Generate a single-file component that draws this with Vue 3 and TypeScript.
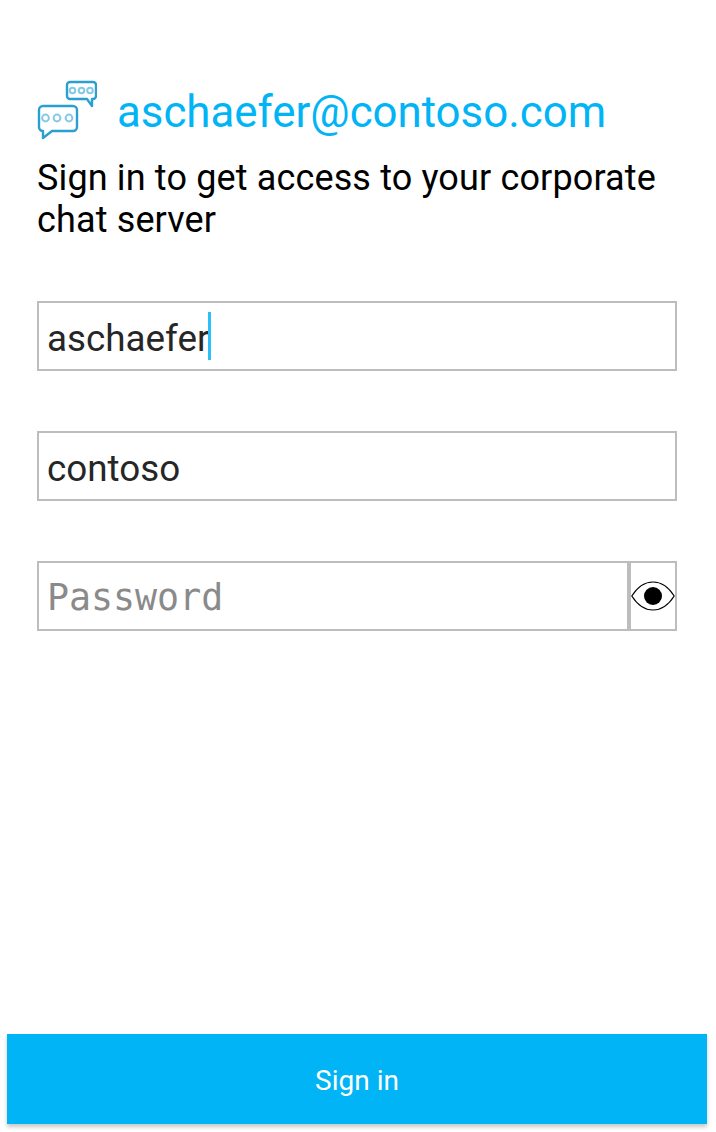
<template>
  <div class="page">
    <div class="head">
      <svg class="logo" width="60" height="60" viewBox="0 0 60 60" fill="none">
        <g stroke="#2a9fd0" stroke-width="2.400" stroke-linejoin="round">
          <path d="M33 2h23a3 3 0 0 1 3 3v11a3 3 0 0 1-3 3h-1v7l-5-7H33a3 3 0 0 1-3-3V5a3 3 0 0 1 3-3z" />
          <path d="M6 26h30a4 4 0 0 1 4 4v17a4 4 0 0 1-4 4H15l-9 7v-7a4 4 0 0 1-4-4V30a4 4 0 0 1 4-4z" />
        </g>
        <g stroke="#86c9e6" stroke-width="2">
          <circle cx="35.500" cy="10.500" r="2.800" />
          <circle cx="44.500" cy="10.500" r="2.800" />
          <circle cx="53" cy="10.500" r="2.800" />
          <circle cx="8.500" cy="38" r="3.400" />
          <circle cx="20" cy="38" r="3.400" />
          <circle cx="32" cy="38" r="3.400" />
        </g>
      </svg>
      <div class="email">{{ email }}</div>
    </div>
    <p class="intro">Sign in to get access to your corporate chat server</p>

    <div class="fields">
      <div class="field">
        <span class="value">{{ username }}</span><span class="caret"></span>
      </div>
      <div class="field">
        <span class="value">{{ domain }}</span>
      </div>
      <div class="field pw">
        <span class="placeholder">Password</span>
        <div class="eye">
          <svg width="44" height="30" viewBox="0 0 44 30" fill="none">
            <path d="M0.8 15C6.5 6 13.5 1 22 1s15.500 5 21.200 14C37.500 24 30.500 29 22 29S6.500 24 0.800 15z" stroke="#000" stroke-width="1.200" />
            <circle cx="22" cy="15" r="9" fill="#000" />
          </svg>
        </div>
      </div>
    </div>

    <div class="spacer"></div>
    <button class="submit">Sign in</button>
  </div>
</template>

<script setup lang="ts">
const email = "aschaefer@contoso.com";
const username = "aschaefer";
const domain = "contoso";
</script>

<style>
html, body { background: #fff; }
</style>

<style scoped>
.page {
  width: 716px;
  height: 1132px;
  box-sizing: border-box;
  padding-top: 80px;
  display: flex;
  flex-direction: column;
  font-family: Roboto, "Liberation Sans", sans-serif;
  overflow: hidden;
}
.head { display: flex; align-items: flex-start; margin-left: 37px; height: 60px; }
.logo { flex: none; }
.email { margin-left: 20px; font-size: 43.800px; line-height: 65px; color: #00b4f5; }
.intro {
  margin: 17px 0 0 37px;
  width: 640px;
  font-size: 36px;
  letter-spacing: 0.140px;
  line-height: 42px;
  color: #000;
}
.fields { margin: 60px 0 0 37px; width: 640px; display: flex; flex-direction: column; gap: 60px; }
.field {
  height: 70px;
  box-sizing: border-box;
  border: 2px solid #bdbdbd;
  display: flex;
  align-items: center;
  padding-left: 8px;
  font-size: 36.800px;
  color: #262626;
}
.value { padding-top: 4px; }
.caret { width: 3px; height: 48px; margin-left: -1px; background: #29c0fb; }
.placeholder { flex: 1; padding-top: 2px; font-family: "DejaVu Sans Mono", monospace; font-size: 36.600px; color: #8a8a8a; }
.eye {
  width: 44px;
  height: 66px;
  flex: none;
  border-left: 4px solid #bdbdbd;
  display: flex;
  align-items: center;
  justify-content: center;
}
.spacer { flex: 1; }
.submit {
  margin: 0 0 8px 7px;
  width: 700px;
  height: 90px;
  flex: none;
  border: 0;
  padding: 2px 0 0;
  background: #00b4f5;
  color: #fff;
  font-family: inherit;
  font-size: 28px;
  box-shadow: 0 3px 4px rgba(0, 0, 0, 0.22);
}
</style>
